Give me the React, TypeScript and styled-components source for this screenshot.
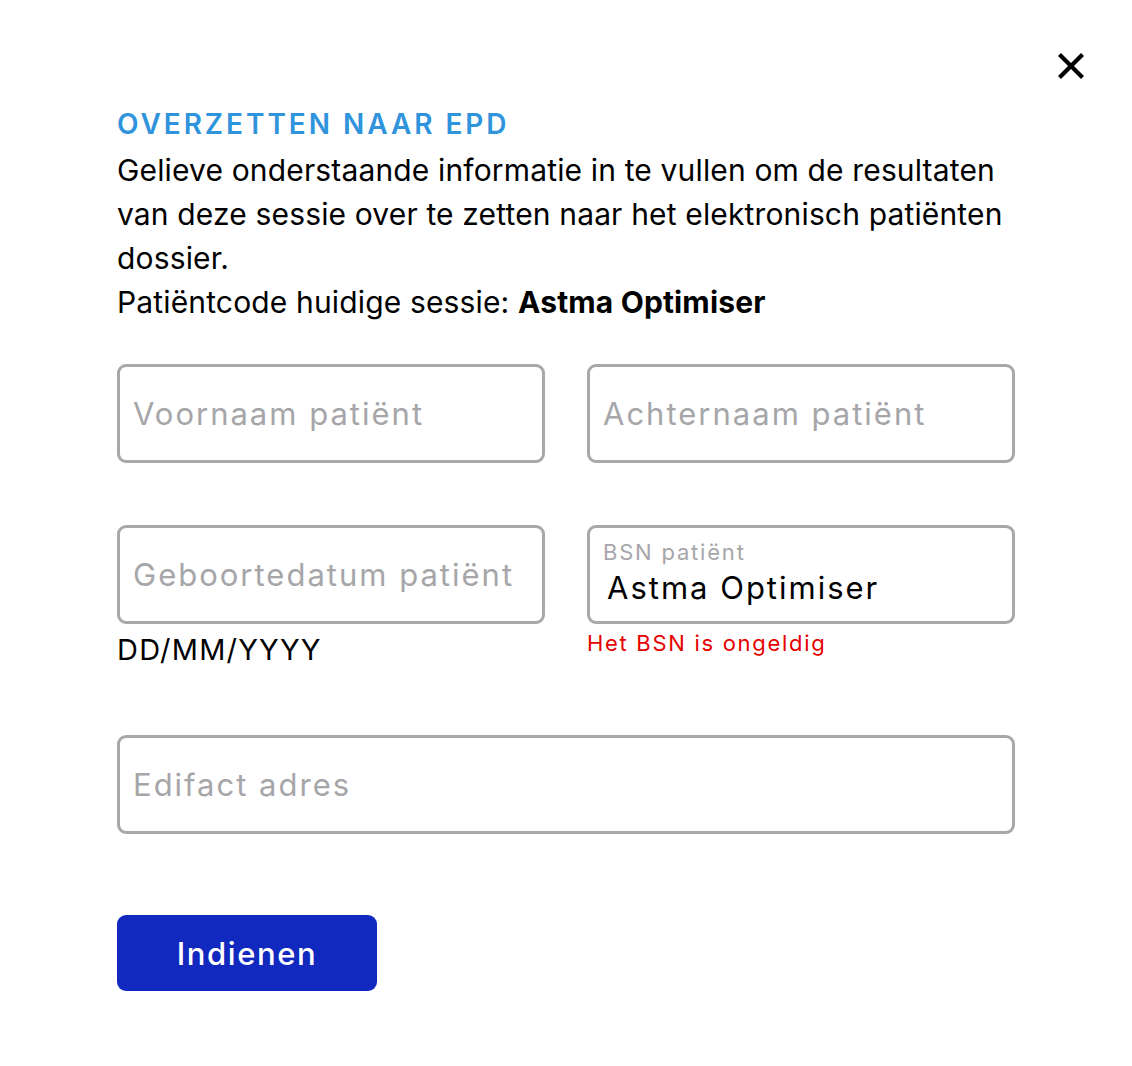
import React from "react";
import styled, { createGlobalStyle } from "styled-components";

const GlobalStyle = createGlobalStyle`
  html, body { margin: 0; padding: 0; background: #ffffff; }
  body { font-family: "Inter", "Noto Sans", sans-serif; color: #000; }
  * { box-sizing: border-box; }
`;

const Modal = styled.div`
  position: relative;
  width: 1132px;
  min-height: 1066px;
  background: #fff;
  padding: 106px 117px 0 117px;
`;

const CloseButton = styled.button`
  position: absolute;
  top: 52px;
  left: 1057px;
  width: 28px;
  height: 28px;
  padding: 0;
  border: none;
  background: transparent;
  cursor: pointer;
  display: flex;
  svg { display: block; }
`;

const Title = styled.h2`
  margin: 0;
  font-family: "Inter", sans-serif;
  font-weight: 600;
  font-size: 28px;
  line-height: 36px;
  letter-spacing: 2.95px;
  color: #2f94dc;
  text-transform: uppercase;
`;

const Intro = styled.p`
  margin: 6px 0 0 0;
  font-size: 30px;
  line-height: 44px;
  letter-spacing: 0.15px;
  font-weight: 400;
  color: #000;
`;

const Strong = styled.strong`
  font-weight: 700;
`;

const Form = styled.form`
  margin-top: 40px;
  display: flex;
  flex-direction: column;
`;

const Row = styled.div<{ $mb: number }>`
  display: grid;
  grid-template-columns: 1fr 1fr;
  column-gap: 42px;
  align-items: start;
  margin-bottom: ${p => p.$mb}px;
`;

const Field = styled.div`
  display: flex;
  flex-direction: column;
`;

const Box = styled.div<{ $floating?: boolean }>`
  height: 99px;
  border: 3px solid #a8a8ab;
  border-radius: 9px;
  display: flex;
  flex-direction: column;
  justify-content: ${p => (p.$floating ? "flex-start" : "center")};
  padding: ${p => (p.$floating ? "12px 13px 0 13px" : "0 13px")};
  background: #fff;
`;

const FloatLabel = styled.label`
  font-size: 22px;
  line-height: 24px;
  color: #a6a6a9;
  letter-spacing: 1.8px;
`;

const Input = styled.input<{ $inset?: number }>`
  border: none;
  outline: none;
  background: transparent;
  font-family: "Inter", sans-serif;
  font-size: 31px;
  line-height: 36px;
  height: 36px;
  padding: 0 0 0 ${p => p.$inset ?? 0}px;
  margin-top: ${p => (p.$inset ? 6 : 0)}px;
  color: #000;
  letter-spacing: 2px;
  width: 100%;
  &::placeholder { color: #a6a6a9; opacity: 1; }
`;

const Hint = styled.div`
  margin-top: 8px;
  font-size: 29px;
  line-height: 36px;
  letter-spacing: 1.2px;
  color: #000;
`;

const ErrorText = styled.div`
  margin-top: 5px;
  font-size: 22px;
  line-height: 28px;
  color: #e60000;
  letter-spacing: 1.7px;
`;

const FullRow = styled.div`
  margin-bottom: 81px;
`;

const Submit = styled.button`
  width: 260px;
  height: 76px;
  border: none;
  border-radius: 9px;
  background: #1229bf;
  color: #fff;
  font-family: "Inter", sans-serif;
  font-size: 31px;
  font-weight: 500;
  letter-spacing: 1.6px;
  cursor: pointer;
`;

export default function App() {
  return (
    <>
      <GlobalStyle />
      <Modal>
        <CloseButton aria-label="Sluiten" type="button">
          <svg width="28" height="28" viewBox="0 0 28 28">
            <path d="M2.5 2.5 L25.5 25.5 M25.5 2.5 L2.5 25.5" stroke="#000" strokeWidth="4.2" fill="none" />
          </svg>
        </CloseButton>
        <Title>Overzetten naar EPD</Title>
        <Intro>
          Gelieve onderstaande informatie in te vullen om de resultaten van deze sessie over te zetten naar het elektronisch patiënten dossier.
          <br />
          Patiëntcode huidige sessie: <Strong>Astma Optimiser</Strong>
        </Intro>
        <Form onSubmit={e => e.preventDefault()}>
          <Row $mb={62}>
            <Field>
              <Box><Input placeholder="Voornaam patiënt" /></Box>
            </Field>
            <Field>
              <Box><Input placeholder="Achternaam patiënt" /></Box>
            </Field>
          </Row>
          <Row $mb={67}>
            <Field>
              <Box><Input placeholder="Geboortedatum patiënt" /></Box>
              <Hint>DD/MM/YYYY</Hint>
            </Field>
            <Field>
              <Box $floating>
                <FloatLabel>BSN patiënt</FloatLabel>
                <Input $inset={4} defaultValue="Astma Optimiser" />
              </Box>
              <ErrorText>Het BSN is ongeldig</ErrorText>
            </Field>
          </Row>
          <FullRow>
            <Box><Input placeholder="Edifact adres" /></Box>
          </FullRow>
          <div>
            <Submit type="submit">Indienen</Submit>
          </div>
        </Form>
      </Modal>
    </>
  );
}
